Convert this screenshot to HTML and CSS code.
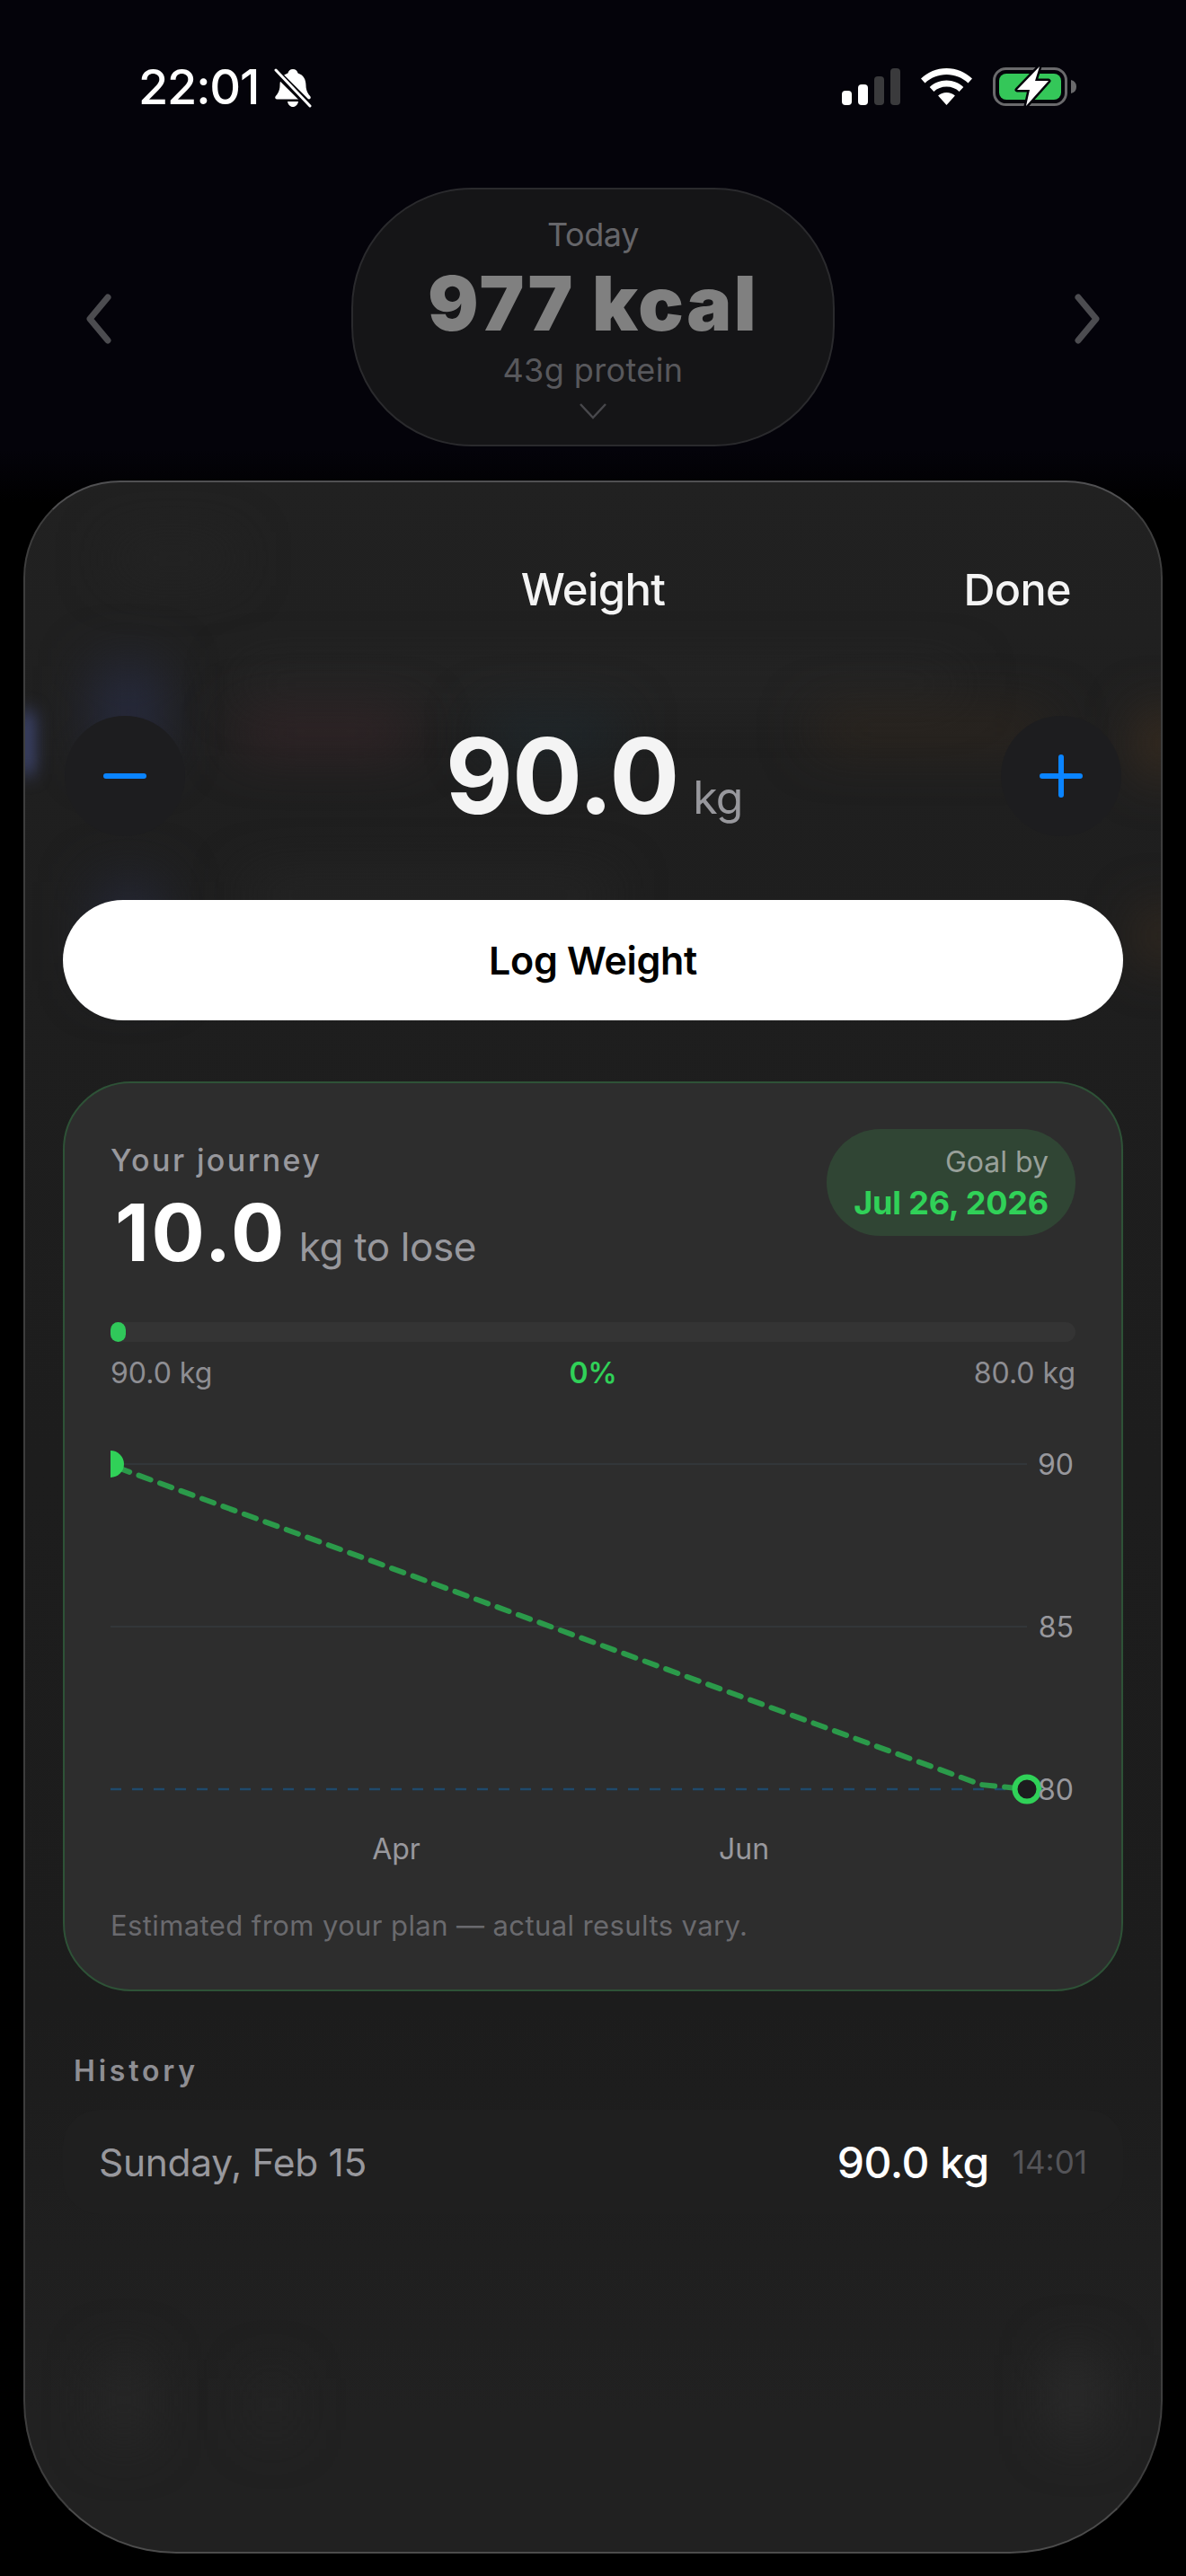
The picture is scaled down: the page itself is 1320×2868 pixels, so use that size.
FILE: index.html
```html
<!DOCTYPE html>
<html lang="en">
<head>
<meta charset="utf-8">
<title>Weight</title>
<link rel="stylesheet" href="styles.css">
</head>
<body>
<div class="page">
  <header class="status">
    <div class="status-left">
      <span class="time">22:01</span>
      <svg class="bell" viewBox="0 0 42 44" aria-hidden="true">
        <path fill="#fff" d="M21 1c3 0 5 2 5.600 4.500C33 7.500 35.500 13 35.500 19c0 6 2.500 9.500 5 12.500.8 1.500 0 3-2 3H3.500c-2 0-2.800-1.500-2-3C4 28.500 6.500 25 6.500 19 6.500 13 9 7.500 15.400 5.500 16 3 18 1 21 1zM15 37h12c-.6 3.500-3 6-6 6s-5.400-2.500-6-6z"/>
        <path stroke="#04030a" stroke-width="8" d="M-2 0 42 44"/>
        <path stroke="#fff" stroke-width="3" stroke-linecap="round" d="M2 2 40 42"/>
      </svg>
    </div>
    <div class="status-right">
      <svg class="signal" viewBox="0 0 65 41" aria-hidden="true">
        <rect x="0" y="25" width="11" height="16" rx="4" fill="#fff"/>
        <rect x="18" y="18" width="11" height="23" rx="4" fill="#fff"/>
        <rect x="36" y="9" width="11" height="32" rx="4" fill="#3a3a3c"/>
        <rect x="54" y="0" width="11" height="41" rx="4" fill="#3a3a3c"/>
      </svg>
      <svg class="wifi" viewBox="0 0 57 41" aria-hidden="true">
        <path fill="#fff" d="M28.500 0C39.500 0 49.500 4.300 57 11.500l-4.500 5C46 10.500 37.700 7 28.500 7S11 10.500 4.500 16.500L0 11.500C7.500 4.300 17.500 0 28.500 0z"/>
        <path fill="#fff" d="M28.500 13.500c7.300 0 13.900 2.800 18.800 7.400l-4.700 5c-3.700-3.400-8.700-5.400-14.100-5.400s-10.400 2-14.100 5.400l-4.700-5c4.900-4.600 11.500-7.400 18.800-7.400z"/>
        <path fill="#fff" d="M28.500 27c3.600 0 6.900 1.300 9.400 3.500L28.500 41 19.100 30.500c2.500-2.200 5.800-3.500 9.400-3.500z"/>
      </svg>
      <svg class="battery" viewBox="0 0 93 46" aria-hidden="true">
        <rect x="1.500" y="3.500" width="80" height="40" rx="13" fill="none" stroke="#6a6a6c" stroke-width="3"/>
        <rect x="7" y="9" width="69" height="29" rx="8" fill="#34c759"/>
        <path d="M87 16c4 1 6 3.500 6 7.500s-2 6.500-6 7.500z" fill="#6a6a6c"/>
        <path d="M52 1 27 27H41L37 45 62 17H47z" fill="#fff" stroke="#04030a" stroke-width="5" stroke-linejoin="round" paint-order="stroke"/>
      </svg>
    </div>
  </header>

  <section class="summary">
    <svg class="chev" viewBox="0 0 32 56" aria-hidden="true"><path d="M26 4 6 28l20 24" /></svg>
    <div class="pill">
      <div class="pill-day">Today</div>
      <div class="pill-kcal">977 kcal</div>
      <div class="pill-protein">43g protein</div>
      <svg class="pill-down" viewBox="0 0 30 18" aria-hidden="true"><path d="M1 1l14 15L29 1"/></svg>
    </div>
    <svg class="chev" viewBox="0 0 32 56" aria-hidden="true"><path d="M6 4l20 24L6 52" /></svg>
  </section>

  <main class="sheet">
    <div class="backdrop" aria-hidden="true">
      <i class="blob blob-head"></i>
      <i class="blob blob-row"></i>
      <i class="blob blob-row2"></i>
      <i class="blob blob-blue1"></i>
      <i class="blob blob-blue2"></i>
      <i class="blob blob-red"></i>
      <i class="blob blob-cyan"></i>
      <i class="blob blob-orange"></i>
      <i class="blob blob-edge1"></i>
      <i class="blob blob-edge2"></i>
      <i class="blob blob-edge3"></i>
      <i class="blob blob-nav1"></i>
      <i class="blob blob-nav2"></i>
      <i class="blob blob-nav3"></i>
    </div>

    <div class="sheet-head">
      <span class="sheet-title">Weight</span>
      <span class="sheet-done">Done</span>
    </div>

    <div class="stepper">
      <div class="step-btn">
        <svg viewBox="0 0 48 48" aria-hidden="true"><path d="M3 24h42"/></svg>
      </div>
      <div class="reading"><span class="reading-num">90.0</span><span class="reading-unit">kg</span></div>
      <div class="step-btn">
        <svg viewBox="0 0 48 48" aria-hidden="true"><path d="M3 24h42M24 3v42"/></svg>
      </div>
    </div>

    <button class="log-btn">Log Weight</button>

    <section class="card">
      <div class="card-head">
        <div>
          <div class="journey">Your journey</div>
          <div class="remain"><span class="remain-num">10.0</span><span class="remain-unit">kg to lose</span></div>
        </div>
        <div class="goal">
          <div class="goal-label">Goal by</div>
          <div class="goal-date">Jul 26, 2026</div>
        </div>
      </div>

      <div class="bar"><div class="bar-fill"></div></div>
      <div class="bar-labels">
        <span>90.0 kg</span>
        <span class="bar-pct">0%</span>
        <span>80.0 kg</span>
      </div>

      <svg class="chart" viewBox="0 0 1074 500" width="1074" height="500">
        <path class="grid" d="M0 30H1020M0 211H1020"/>
        <path class="target" d="M0 392H1020"/>
        <path class="proj" d="M8 34 969 387 1020 392"/>
        <circle class="dot-start" cx="0" cy="30" r="15"/>
        <circle class="dot-end" cx="1020" cy="392" r="13.500"/>
        <text class="axis" x="1072" y="42" text-anchor="end">90</text>
        <text class="axis" x="1072" y="223" text-anchor="end">85</text>
        <text class="axis" x="1072" y="404" text-anchor="end">80</text>
        <text class="axis" x="318" y="470" text-anchor="middle">Apr</text>
        <text class="axis" x="705" y="470" text-anchor="middle">Jun</text>
      </svg>

      <p class="note">Estimated from your plan — actual results vary.</p>
    </section>

    <h2 class="history-title">History</h2>
    <div class="history-row">
      <span class="history-date">Sunday, Feb 15</span>
      <span class="history-val">90.0 kg</span>
      <span class="history-time">14:01</span>
    </div>
  </main>
</div>
</body>
</html>
```
FILE: styles.css
```css
* { box-sizing: border-box; }
html, body { margin: 0; padding: 0; }
body {
  background: #000;
  font-family: Inter, "Liberation Sans", sans-serif;
  color: #fff;
}
.page {
  width: 1320px;
  height: 2868px;
  overflow: hidden;
  background: linear-gradient(#04030a 0, #04030a 500px, #000 560px);
  padding-top: 76px;
}

/* status bar */
.status {
  height: 44px;
  padding: 0 122px 0 154px;
  display: flex;
  justify-content: space-between;
  align-items: flex-start;
}
.status-left { display: flex; align-items: flex-start; gap: 17px; }
.time { font-size: 54px; line-height: 42px; font-weight: 500; letter-spacing: -1.2px; }
.bell { width: 42px; height: 44px; }
.status-right { display: flex; align-items: flex-start; }
.signal { width: 65px; height: 41px; margin-right: 23px; }
.wifi { width: 57px; height: 41px; margin-right: 23px; }
.battery { width: 93px; height: 46px; margin-top: -3px; }

/* summary */
.summary {
  margin-top: 89px;
  display: flex;
  justify-content: space-between;
  align-items: center;
  padding: 0 94px;
}
.chev { width: 32px; height: 56px; margin-top: 4px; }
.chev path { fill: none; stroke: #4c4c50; stroke-width: 7; stroke-linecap: round; stroke-linejoin: round; }
.pill {
  width: 538px;
  height: 288px;
  border: 2px solid #2a2a2d;
  border-radius: 134px;
  background: #151517;
  display: flex;
  flex-direction: column;
  align-items: center;
  padding-top: 28px;
}
.pill-day { font-size: 36px; line-height: 44px; color: #66666a; letter-spacing: -0.4px; }
.pill-kcal { margin-top: 5px; font-size: 84px; line-height: 100px; font-weight: 900; color: #808080; letter-spacing: 2.4px; }
.pill-protein { font-size: 36px; line-height: 44px; color: #58585c; margin-top: 2px; letter-spacing: 0.4px; }
.pill-down { width: 30px; height: 18px; margin-top: 15px; }
.pill-down path { fill: none; stroke: #48484c; stroke-width: 2.5; }

/* sheet */
.sheet {
  position: relative;
  margin: 38px 26px 0;
  height: 2308px;
  padding: 0 42px;
  border: 2px solid #3e3e3e;
  border-top-color: #505052;
  border-bottom-color: #4c4c4c;
  border-radius: 108px 108px 170px 170px;
  background: linear-gradient(#212121 0, #1e1e1e 500px, #1c1c1c 1700px, #212121 2150px);
  overflow: hidden;
}
.backdrop { position: absolute; inset: 0; pointer-events: none; }
.blob { position: absolute; display: block; filter: blur(30px); }
.blob-head { left: 100px; top: 70px; width: 130px; height: 30px; background: #252525; }
.blob-row { left: 240px; top: 215px; width: 800px; height: 20px; background: #2c2c2c; }
.blob-row2 { left: 250px; top: 445px; width: 400px; height: 30px; background: #282828; }
.blob-blue1 { left: 80px; top: 205px; width: 70px; height: 100px; background: #272b40; }
.blob-blue2 { left: 80px; top: 445px; width: 70px; height: 110px; background: #252838; }
.blob-red { left: 240px; top: 262px; width: 190px; height: 32px; background: #3a262a; }
.blob-cyan { left: 510px; top: 262px; width: 150px; height: 36px; background: #1e2a30; }
.blob-orange { left: 880px; top: 262px; width: 260px; height: 26px; background: #35291d; }
.blob-edge1 { left: 1245px; top: 260px; width: 40px; height: 60px; background: #4a341f; }
.blob-edge2 { left: 1245px; top: 480px; width: 40px; height: 50px; background: #41301f; }
.blob-edge3 { left: -6px; top: 255px; width: 14px; height: 70px; background: #4a5590; filter: blur(10px); }
.blob-nav1 { left: 90px; top: 2090px; width: 40px; height: 90px; background: #2a2a2a; }
.blob-nav2 { left: 265px; top: 2110px; width: 20px; height: 60px; background: #2a2a2a; }
.blob-nav3 { left: 1150px; top: 2085px; width: 40px; height: 90px; background: #303030; }

.sheet > *:not(.backdrop) { position: relative; }

.sheet-head {
  margin-top: 79px;
  height: 80px;
  display: flex;
  align-items: center;
  justify-content: center;
}
.sheet-title { font-size: 49px; font-weight: 500; color: #f4f4f4; letter-spacing: -0.6px; }
.sheet-done {
  position: absolute;
  right: 58px;
  top: 50%;
  transform: translateY(-50%);
  font-size: 48.500px;
  font-weight: 500;
  color: #f4f4f4;
  letter-spacing: -0.6px;
}

.stepper {
  margin-top: 101px;
  height: 134px;
  display: flex;
  align-items: center;
  justify-content: space-between;
  padding: 0 2px;
}
.step-btn {
  width: 134px;
  height: 134px;
  border-radius: 50%;
  background: #1d1d1f;
  display: flex;
  align-items: center;
  justify-content: center;
}
.step-btn svg { width: 48px; height: 48px; }
.step-btn path { fill: none; stroke: #0a84ff; stroke-width: 6; stroke-linecap: round; }
.reading { display: flex; align-items: baseline; gap: 16px; padding-left: 2px; }
.reading-num { font-size: 116px; line-height: 134px; font-weight: 700; color: #f4f4f4; letter-spacing: -1px; }
.reading-unit { font-size: 50px; color: #98989d; letter-spacing: -1px; }

.log-btn {
  display: block;
  width: 1180px;
  height: 134px;
  margin: 71px 0 0;
  padding: 0;
  border: 0;
  border-radius: 67px;
  background: #fff;
  color: #000;
  font-family: inherit;
  font-size: 43px;
  font-weight: 600;
  letter-spacing: -0.3px;
}

/* journey card */
.card {
  margin-top: 68px;
  width: 1180px;
  height: 1013px;
  padding: 51px 51px 0;
  border: 2px solid #2e5237;
  border-radius: 76px;
  background: #2d2d2d;
}
.card-head { display: flex; justify-content: space-between; align-items: flex-start; }
.journey {
  margin-top: 15px;
  font-size: 34px;
  line-height: 40px;
  font-weight: 500;
  color: #98989d;
  letter-spacing: 2.400px;
}
.remain { margin-top: 10px; display: flex; align-items: baseline; gap: 14px; padding-left: 5px; }
.remain-num { font-size: 88px; line-height: 100px; font-weight: 700; color: #fff; letter-spacing: 2.500px; }
.remain-unit { font-size: 44px; color: #98989d; letter-spacing: -0.4px; }
.goal {
  width: 277px;
  height: 119px;
  border-radius: 60px;
  background: #304534;
  padding: 15px 30px 0 0;
  text-align: right;
}
.goal-label { font-size: 32px; line-height: 44px; color: #98a09a; }
.goal-date { font-size: 36px; line-height: 46px; font-weight: 700; color: #30d158; letter-spacing: -0.2px; }

.bar { margin-top: 50px; height: 22px; border-radius: 11px; background: #343434; }
.bar-fill { width: 17px; height: 22px; border-radius: 9px; background: #30c85a; }
.bar-labels {
  margin-top: 15px;
  display: grid;
  grid-template-columns: 1fr auto 1fr;
  font-size: 32px;
  line-height: 40px;
  color: #8e8e93;
}
.bar-labels span:last-child { text-align: right; }
.bar-labels .bar-pct { color: #30d158; font-weight: 600; }

.chart { display: block; margin-top: 51px; overflow: hidden; }
.grid { fill: none; stroke: #343a3e; stroke-width: 1.500; }
.target { fill: none; stroke: #1f4a6c; stroke-width: 2.500; stroke-dasharray: 12 12; }
.proj { fill: none; stroke: #2b9a4a; stroke-width: 6; stroke-dasharray: 14 11; stroke-linecap: round; }
.dot-start { fill: #30d158; }
.dot-end { fill: #1c1c1e; stroke: #30d158; stroke-width: 6; }
.axis { font-family: Inter, "Liberation Sans", sans-serif; font-size: 32px; fill: #98989d; }

.note {
  margin: 24px 0 0;
  font-size: 31px;
  line-height: 40px;
  color: #6a6a6e;
  letter-spacing: 0.400px;
}

.history-title {
  margin: 69px 0 0 12px;
  font-size: 32px;
  line-height: 40px;
  font-weight: 600;
  color: #8e8e93;
  letter-spacing: 3.800px;
}
.history-row {
  margin-top: 23px;
  height: 116px;
  display: flex;
  align-items: center;
  padding: 0 40px 0 40px;
  border-radius: 40px;
  background: #1f1f1f;
}
.history-date { flex: 1; font-size: 42.500px; color: #98989d; letter-spacing: -0.3px; }
.history-val { font-size: 48px; font-weight: 500; color: #fff; letter-spacing: -0.5px; }
.history-time { margin-left: 26px; font-size: 35px; color: #545458; letter-spacing: 0; }
```
